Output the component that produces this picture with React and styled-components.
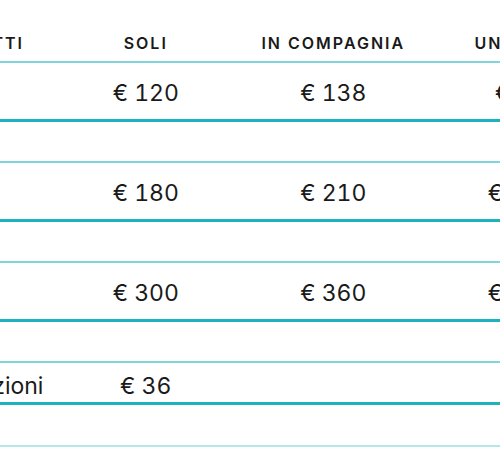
import React from 'react';
import styled, { createGlobalStyle } from 'styled-components';

const GlobalStyle = createGlobalStyle`
  html, body {
    margin: 0;
    padding: 0;
    background: #ffffff;
    overflow: hidden;
  }
  body {
    font-family: Inter, 'Liberation Sans', sans-serif;
    color: #1c1c1c;
  }
`;

const Viewport = styled.div`
  width: 500px;
  height: 469px;
  overflow: hidden;
`;

const Table = styled.div`
  margin-left: -123px;
  width: 737.5px;
`;

const Row = styled.div`
  display: grid;
  grid-template-columns: 175px repeat(3, 187.5px);
  align-items: start;
  box-sizing: border-box;
  height: ${(p) => p.height}px;
  border-bottom: ${(p) => p.line};
`;

const Head = styled.div`
  padding: 33px ${(p) => (p.first ? '28px' : '0')} 0 0;
  font-size: 16px;
  line-height: 20px;
  font-weight: 600;
  letter-spacing: 2px;
  text-transform: uppercase;
  text-align: ${(p) => (p.first ? 'right' : 'center')};
  white-space: nowrap;
  color: #1a1a1a;
`;

const Cell = styled.div`
  padding-top: ${(p) => (p.compact ? 9 : 16)}px;
  font-size: 23px;
  line-height: 28px;
  font-weight: 400;
  font-variant-numeric: tabular-nums;
  text-align: ${(p) => (p.left ? 'left' : 'center')};
  padding-left: ${(p) => (p.left ? '20px' : '0')};
  white-space: nowrap;
  color: #1a1a1a;
`;

const THIN = '2px solid #80d4dc';
const THICK = '3px solid #1cb3be';
const PALE = '2px solid #b4e7eb';

const rows = [
  { label: '2 notti', prices: ['€ 120', '€ 138', '€ 84'] },
  { label: '3 notti', prices: ['€ 180', '€ 210', '€ 150'] },
  { label: '5 notti', prices: ['€ 300', '€ 360', '€ 240'] },
  { label: 'Due colazioni', prices: ['€ 36', '', ''], compact: true }
];

const App = () => (
  <Viewport>
    <GlobalStyle />
    <Table>
      <Row height={63} line={THIN}>
        <Head first>Pacchetti</Head>
        <Head>Soli</Head>
        <Head>In compagnia</Head>
        <Head>Under 12</Head>
      </Row>
      {rows.map((r, i) => (
        <React.Fragment key={r.label}>
          {i > 0 && <Row height={41} line={THIN} />}
          <Row height={r.compact ? 42 : 59} line={THICK}>
            <Cell left compact={r.compact}>
              {r.label}
            </Cell>
            {r.prices.map((p, j) => (
              <Cell key={j} compact={r.compact}>
                {p}
              </Cell>
            ))}
          </Row>
        </React.Fragment>
      ))}
      <Row height={42} line={PALE} />
    </Table>
  </Viewport>
);

export default App;
